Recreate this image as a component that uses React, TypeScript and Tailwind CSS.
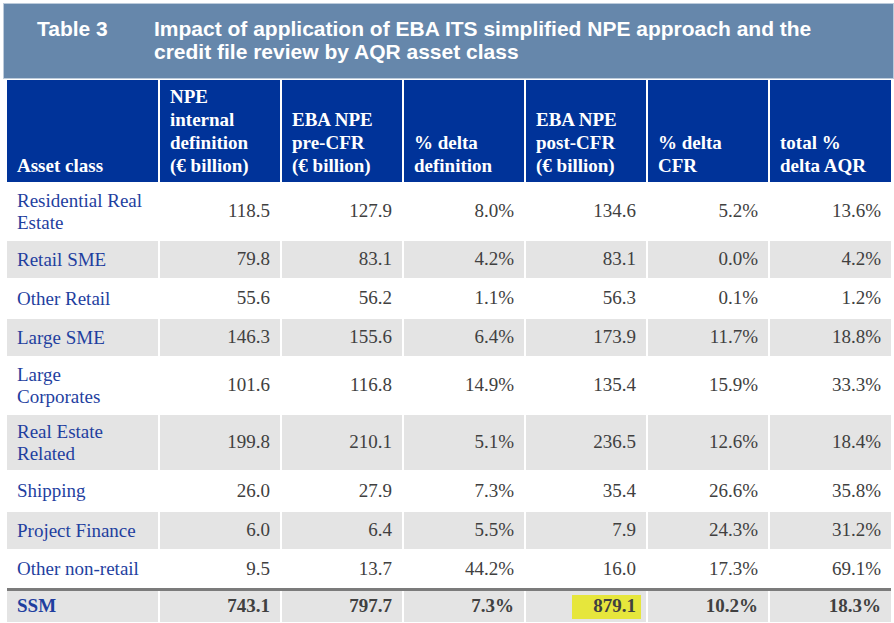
const COLS = "grid grid-cols-[151px_repeat(5,120px)_121px] gap-x-[2px]";

type Row = { name: string[]; values: string[]; h: string; grey: boolean };

const ROWS: Row[] = [
  { name: ["Residential Real", "Estate"], values: ["118.5", "127.9", "8.0%", "134.6", "5.2%", "13.6%"], h: "h-[55px]", grey: false },
  { name: ["Retail SME"], values: ["79.8", "83.1", "4.2%", "83.1", "0.0%", "4.2%"], h: "h-[37px]", grey: true },
  { name: ["Other Retail"], values: ["55.6", "56.2", "1.1%", "56.3", "0.1%", "1.2%"], h: "h-[37px]", grey: false },
  { name: ["Large SME"], values: ["146.3", "155.6", "6.4%", "173.9", "11.7%", "18.8%"], h: "h-[37px]", grey: true },
  { name: ["Large", "Corporates"], values: ["101.6", "116.8", "14.9%", "135.4", "15.9%", "33.3%"], h: "h-[55px]", grey: false },
  { name: ["Real Estate", "Related"], values: ["199.8", "210.1", "5.1%", "236.5", "12.6%", "18.4%"], h: "h-[55px]", grey: true },
  { name: ["Shipping"], values: ["26.0", "27.9", "7.3%", "35.4", "26.6%", "35.8%"], h: "h-[38px]", grey: false },
  { name: ["Project Finance"], values: ["6.0", "6.4", "5.5%", "7.9", "24.3%", "31.2%"], h: "h-[37px]", grey: true },
  { name: ["Other non-retail"], values: ["9.5", "13.7", "44.2%", "16.0", "17.3%", "69.1%"], h: "h-[36px]", grey: false },
];

const HEADERS: string[][] = [
  ["Asset class"],
  ["NPE", "internal", "definition", "(€ billion)"],
  ["EBA NPE", "pre-CFR", "(€ billion)"],
  ["% delta", "definition"],
  ["EBA NPE", "post-CFR", "(€ billion)"],
  ["% delta", "CFR"],
  ["total %", "delta AQR"],
];

const SSM = ["743.1", "797.7", "7.3%", "879.1", "10.2%", "18.3%"];

export default function App() {
  return (
    <div className="min-h-screen bg-white pl-[3px] pt-[3px] font-['Liberation_Serif','Times_New_Roman',serif]">
      <div className="flex h-[76px] w-[891px] border border-[#bccbdb] bg-[#6687ab] font-['Liberation_Sans',Arial,sans-serif] text-[21px] font-bold leading-[23px] text-white">
        <div className="w-[150px] shrink-0 pl-[33px] pt-[13px]">Table 3</div>
        <div className="pt-[13px]">
          Impact of application of EBA ITS simplified NPE approach and the
          <br />
          credit file review by AQR asset class
        </div>
      </div>

      <div className="ml-[4px] mt-[1px] w-[884px]">
        <div className={`${COLS} h-[102px]`}>
          {HEADERS.map((lines, i) => (
            <div
              key={i}
              className="flex flex-col justify-end bg-[#003399] pb-[5px] pl-[10px] text-[19px] font-bold leading-[23px] text-white"
            >
              {lines.map((l) => (
                <div key={l}>{l}</div>
              ))}
            </div>
          ))}
        </div>

        {ROWS.map((r) => (
          <div key={r.name.join(" ")} className={`${COLS} ${r.h} mt-[2px]`}>
            <div
              className={`flex flex-col justify-center pl-[10px] text-[19px] leading-[22px] text-[#1f3f9f] ${
                r.grey ? "bg-[#e4e4e4]" : ""
              }`}
            >
              {r.name.map((n) => (
                <div key={n}>{n}</div>
              ))}
            </div>
            {r.values.map((v, i) => (
              <div
                key={i}
                className={`flex items-center justify-end pr-[10px] text-[19px] text-[#404040] ${
                  r.grey ? "bg-[#e4e4e4]" : ""
                }`}
              >
                {v}
              </div>
            ))}
          </div>
        ))}

        <div className={`${COLS} mt-[1px] h-[34px] border-t-[3px] border-[#7b7b7b] bg-white`}>
          <div className="flex items-center bg-[#e4e4e4] pl-[10px] text-[19px] font-bold text-[#1f3f9f]">
            SSM
          </div>
          {SSM.map((v, i) =>
            i === 3 ? (
              <div key={i} className="flex items-center justify-end bg-[#e4e4e4] pr-[5px]">
                <span className="flex h-[24px] items-center bg-[#e6e63c] pl-[21px] pr-[5px] text-[19px] font-bold text-[#404040]">
                  {v}
                </span>
              </div>
            ) : (
              <div
                key={i}
                className="flex items-center justify-end bg-[#e4e4e4] pr-[10px] text-[19px] font-bold text-[#404040]"
              >
                {v}
              </div>
            )
          )}
        </div>
      </div>
    </div>
  );
}
